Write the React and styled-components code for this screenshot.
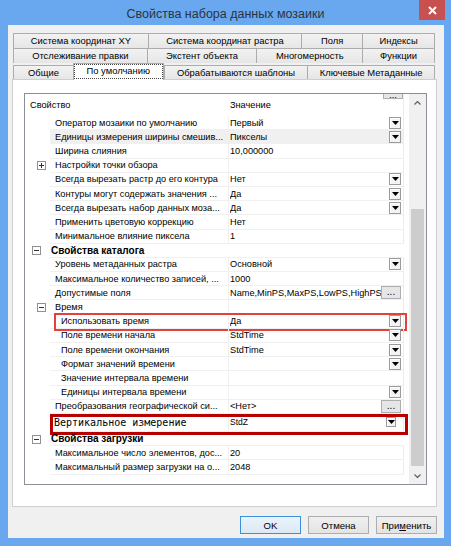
import styled, { createGlobalStyle } from 'styled-components'

const tabRows = [
    { height: 15, tabs: [
        { label: 'Система координат XY', width: 135 },
        { label: 'Система координат растра', width: 154 },
        { label: 'Поля', width: 61 },
        { label: 'Индексы', width: 73 },
    ] },
    { height: 15, tabs: [
        { label: 'Отслеживание правки', width: 134 },
        { label: 'Экстент объекта', width: 110 },
        { label: 'Многомерность', width: 106 },
        { label: 'Функции', width: 73 },
    ] },
    { height: 16, tabs: [
        { label: 'Общие', width: 60 },
        { label: 'По умолчанию', width: 91, active: true },
        { label: 'Обрабатываются шаблоны', width: 144 },
        { label: 'Ключевые Метаданные', width: 128 },
    ] },
];

const rows = [
    { name: 'Оператор мозаики по умолчанию', value: 'Первый', control: 'drop' },
    { name: 'Единицы измерения ширины смешив...', value: 'Пикселы', control: 'drop', selected: true },
    { name: 'Ширина слияния', value: '10,000000' },
    { type: 'group', name: 'Настройки точки обзора', sign: '+' },
    { name: 'Всегда вырезать растр до его контура', value: 'Нет', control: 'drop' },
    { name: 'Контуры могут содержать значения ...', value: 'Да', control: 'drop' },
    { name: 'Всегда вырезать набор данных моза...', value: 'Да', control: 'drop' },
    { name: 'Применить цветовую коррекцию', value: 'Нет' },
    { name: 'Минимальное влияние пиксела', value: '1' },
    { type: 'category', name: 'Свойства каталога' },
    { name: 'Уровень метаданных растра', value: 'Основной', control: 'drop' },
    { name: 'Максимальное количество записей, ...', value: '1000' },
    { name: 'Допустимые поля', value: 'Name,MinPS,MaxPS,LowPS,HighPS,Ta', control: 'more' },
    { type: 'group', name: 'Время', sign: '-' },
    { name: 'Использовать время', value: 'Да', control: 'drop', level: 1, mark: 'light' },
    { name: 'Поле времени начала', value: 'StdTime', control: 'drop', level: 1 },
    { name: 'Поле времени окончания', value: 'StdTime', control: 'drop', level: 1 },
    { name: 'Формат значений времени', value: '', control: 'drop', level: 1 },
    { name: 'Значение интервала времени', value: '', level: 1 },
    { name: 'Единицы интервала времени', value: '', control: 'drop', level: 1 },
    { name: 'Преобразования географической си...', value: '<Нет>', control: 'more' },
    { name: 'Вертикальное измерение', value: 'StdZ', control: 'drop', mark: 'strong' },
    { type: 'category', name: 'Свойства загрузки' },
    { name: 'Максимальное число элементов, дос...', value: '20' },
    { name: 'Максимальный размер загрузки на о...', value: '2048' },
];

function Expander({ sign, offset }) {
    return (
        <ExpanderBox $offset={offset}>
            <svg width="5" height="5" viewBox="0 0 5 5">
                <path d="M0 2.5h5" stroke="#333" strokeWidth="1" />
                {sign === '+' && <path d="M2.5 0v5" stroke="#333" strokeWidth="1" />}
            </svg>
        </ExpanderBox>
    );
}

function DropButton({ small }) {
    return (
        <DropBox $small={small}>
            <svg width="7" height="4" viewBox="0 0 7 4">
                <path d="M0 0h7L3.5 4z" fill="#000" />
            </svg>
        </DropBox>
    );
}

function PropertyRow({ row }) {
    const strong = row.mark === 'strong';

    if (row.type === 'category') {
        return (
            <Row>
                <Gutter><Expander sign="-" offset={7} /></Gutter>
                <CategoryName>{row.name}</CategoryName>
            </Row>
        );
    }

    return (
        <Row $tall={strong}>
            <Gutter>{row.type === 'group' && <Expander sign={row.sign} offset={12} />}</Gutter>
            <NameCell $level={row.level || 0} $selected={row.selected} $mono={strong}>
                {row.name}
            </NameCell>
            <ValueCell $selected={row.selected}>
                <ValueText $small={strong}>{row.value}</ValueText>
                {row.control === 'drop' && <DropButton small={strong} />}
                {row.control === 'more' && <MoreButton>...</MoreButton>}
            </ValueCell>
            {row.mark && <Mark $variant={row.mark} />}
        </Row>
    );
}

function App() {
    return (
        <>
            <GlobalStyle />
            <Window>
                <TitleBar>
                    <Title>Свойства набора данных мозаики</Title>
                    <CloseButton>
                        <svg width="9" height="9" viewBox="0 0 9 9">
                            <path d="M1 1l7 7M8 1l-7 7" stroke="#fff" strokeWidth="2" />
                        </svg>
                    </CloseButton>
                </TitleBar>

                <DialogBody>
                    <TabStrip>
                        {tabRows.map((tabRow, i) => (
                            <TabRow key={i} $h={tabRow.height}>
                                {tabRow.tabs.map((tab) => (
                                    <Tab key={tab.label} $w={tab.width} $active={tab.active} $lower={i === 2}>
                                        {tab.label}
                                    </Tab>
                                ))}
                            </TabRow>
                        ))}
                    </TabStrip>

                    <TabPanel>
                        <PropertyGrid>
                            <GridContent>
                                <GridHeader>
                                    <HeaderName>Свойство</HeaderName>
                                    <HeaderValue>Значение</HeaderValue>
                                    <HiddenButton>...</HiddenButton>
                                </GridHeader>
                                {rows.map((row) => (
                                    <PropertyRow key={row.name} row={row} />
                                ))}
                            </GridContent>
                            <ScrollBar>
                                <ScrollArrow>
                                    <svg width="7" height="4" viewBox="0 0 7 4">
                                        <path d="M0.5 3.5L3.5 0.5L6.5 3.5" stroke="#606060" strokeWidth="1.2" fill="none" />
                                    </svg>
                                </ScrollArrow>
                                <ScrollTrack>
                                    <ScrollThumb $top={98} $h={257} />
                                </ScrollTrack>
                                <ScrollArrow>
                                    <svg width="7" height="4" viewBox="0 0 7 4">
                                        <path d="M0.5 0.5L3.5 3.5L6.5 0.5" stroke="#606060" strokeWidth="1.2" fill="none" />
                                    </svg>
                                </ScrollArrow>
                            </ScrollBar>
                        </PropertyGrid>
                    </TabPanel>

                    <Footer>
                        <DialogButton $default>OK</DialogButton>
                        <DialogButton>Отмена</DialogButton>
                        <DialogButton>При<u>м</u>енить</DialogButton>
                    </Footer>
                </DialogBody>
            </Window>
        </>
    );
}

const GlobalStyle = createGlobalStyle`
    html, body {
        margin: 0;
        padding: 0;
        background: #69a8ef;
    }
    body {
        font-family: "Liberation Sans", Arial, sans-serif;
        font-size: 9.2px;
        color: #000;
    }
    * {
        box-sizing: border-box;
    }
`;

const Window = styled.div`
    width: 451px;
    height: 546px;
    background: #69a8ef;
    display: flex;
    flex-direction: column;
`;

const TitleBar = styled.div`
    height: 25px;
    flex: none;
    display: grid;
    grid-template-columns: 1fr auto 1fr;
    align-items: start;
`;

const Title = styled.div`
    grid-column: 2;
    font-size: 12.5px;
    line-height: 28px;
    color: #2b3340;
    white-space: nowrap;
`;

const CloseButton = styled.div`
    grid-column: 3;
    justify-self: end;
    width: 26px;
    height: 20px;
    margin-right: 6px;
    background: #c75050;
    display: flex;
    align-items: center;
    justify-content: center;
`;

const DialogBody = styled.div`
    flex: 1;
    margin: 0 7px 8px 8px;
    background: #f0f0f0;
    padding: 8px 7px 0 4px;
    display: flex;
    flex-direction: column;
`;

const TabStrip = styled.div`
    margin: 0 2px 0 1px;
    display: flex;
    flex-direction: column;
`;

const TabRow = styled.div`
    height: ${({ $h }) => $h}px;
    display: flex;
    align-items: flex-end;
`;

const Tab = styled.div`
    width: ${({ $w }) => $w}px;
    height: ${({ $active, $lower }) => ($active ? '17px' : $lower ? '14px' : '100%')};
    margin-bottom: ${({ $active }) => ($active ? '-1px' : '0')};
    position: relative;
    z-index: ${({ $active }) => ($active ? 1 : 0)};
    border: 1px solid #acacac;
    border-bottom: none;
    border-right-width: ${({ $active }) => ($active ? '1px' : '0')};
    background: ${({ $active }) => ($active ? '#fff' : 'linear-gradient(#f2f2f2, #e6e6e6)')};
    outline: ${({ $active }) => ($active ? '1px dotted #444' : 'none')};
    outline-offset: -2px;
    display: flex;
    align-items: ${({ $active }) => ($active ? 'flex-start' : 'center')};
    justify-content: center;
    padding-top: ${({ $active }) => ($active ? '1px' : '0')};
    font-size: 9.4px;
    line-height: 12px;
    color: #000;
    white-space: nowrap;

    &:last-child {
        border-right-width: 1px;
    }
`;

const TabPanel = styled.div`
    height: 428px;
    flex: none;
    background: #fff;
    border: 1px solid #cfcfcf;
    padding: 13px 9px 0 11px;
`;

const PropertyGrid = styled.div`
    height: 392px;
    border: 1px solid #8a8f98;
    display: flex;
    background: #fff;
`;

const GridContent = styled.div`
    flex: 1;
    padding-right: 5px;
    display: flex;
    flex-direction: column;
    overflow: hidden;
`;

const GridHeader = styled.div`
    height: 22px;
    flex: none;
    display: flex;
    align-items: center;
    position: relative;
`;

const HeaderName = styled.div`
    width: 203px;
    padding-left: 5px;
`;

const HeaderValue = styled.div`
    flex: 1;
    height: 100%;
    display: flex;
    align-items: center;
    padding-left: 2px;
    border-right: 1px solid #e4ecf4;
`;

const HiddenButton = styled.div`
    position: absolute;
    top: 0;
    right: 1px;
    width: 20px;
    height: 5px;
    border: 1px solid #adadad;
    border-top: none;
    background: #e6e6e6;
    font-size: 9px;
    line-height: 2px;
    text-align: center;
    overflow: hidden;
`;

const Row = styled.div`
    height: ${({ $tall }) => ($tall ? '18px' : '14.2px')};
    flex: none;
    display: flex;
    position: relative;
`;

const Gutter = styled.div`
    width: 25px;
    flex: none;
    display: flex;
    align-items: center;
`;

const ExpanderBox = styled.div`
    width: 9px;
    height: 9px;
    margin-left: ${({ $offset }) => $offset}px;
    border: 1px solid #919191;
    background: #fff;
    display: flex;
    align-items: center;
    justify-content: center;
`;

const NameCell = styled.div`
    width: 178px;
    flex: none;
    display: flex;
    align-items: center;
    padding-left: ${({ $level, $mono }) => ($mono ? 4 : 5 + $level * 6)}px;
    border-bottom: 1px solid #f0f0f0;
    background: ${({ $selected }) => ($selected ? '#f0f0f0' : 'transparent')};
    font-family: ${({ $mono }) => ($mono ? '"DejaVu Sans Mono", monospace' : 'inherit')};
    font-size: ${({ $mono }) => ($mono ? '10px' : '9.2px')};
    white-space: nowrap;
    overflow: hidden;
`;

const CategoryName = styled.div`
    flex: 1;
    display: flex;
    align-items: center;
    padding-left: 1px;
    border-bottom: 1px solid #f0f0f0;
    font-size: 10px;
    font-weight: bold;
    white-space: nowrap;
`;

const ValueCell = styled.div`
    flex: 1;
    min-width: 0;
    display: flex;
    align-items: center;
    padding: 0 2px 0 1px;
    border-left: 1px solid #f0f0f0;
    border-right: 1px solid #ececec;
    border-bottom: 1px solid #f0f0f0;
    background: ${({ $selected }) => ($selected ? '#f0f0f0' : 'transparent')};
`;

const ValueText = styled.div`
    flex: 1;
    min-width: 0;
    overflow: hidden;
    white-space: nowrap;
    font-size: ${({ $small }) => ($small ? '8.5px' : '9.2px')};
`;

const DropBox = styled.div`
    width: ${({ $small }) => ($small ? '10px' : '12px')};
    height: ${({ $small }) => ($small ? '10px' : '12px')};
    margin-right: ${({ $small }) => ($small ? '5px' : '0')};
    flex: none;
    border: 1px solid #9a9a9a;
    background: #f3f3f3;
    box-shadow: inset 1px 1px 0 #fff;
    display: flex;
    align-items: center;
    justify-content: center;
`;

const MoreButton = styled.div`
    width: 20px;
    height: 13px;
    flex: none;
    border: 1px solid #adadad;
    background: #e6e6e6;
    font-size: 10px;
    line-height: 9px;
    text-align: center;
`;

const Mark = styled.div`
    position: absolute;
    pointer-events: none;
    top: ${({ $variant }) => ($variant === 'strong' ? '0' : '-2px')};
    bottom: ${({ $variant }) => ($variant === 'strong' ? '-3px' : '-2px')};
    left: ${({ $variant }) => ($variant === 'strong' ? '25px' : '29px')};
    right: ${({ $variant }) => ($variant === 'strong' ? '-4px' : '-3px')};
    border: ${({ $variant }) => ($variant === 'strong' ? '3px solid #b80000' : '2px solid #e5403c')};
`;

const ScrollBar = styled.div`
    width: 17px;
    flex: none;
    background: #f0f0f0;
    display: flex;
    flex-direction: column;
`;

const ScrollArrow = styled.div`
    height: 17px;
    flex: none;
    display: flex;
    align-items: center;
    justify-content: center;
`;

const ScrollTrack = styled.div`
    flex: 1;
    display: flex;
    flex-direction: column;
    align-items: center;
`;

const ScrollThumb = styled.div`
    width: 13px;
    height: ${({ $h }) => $h}px;
    margin-top: ${({ $top }) => $top}px;
    background: #cdcdcd;
`;

const Footer = styled.div`
    display: flex;
    justify-content: flex-end;
    gap: 7px;
    margin-top: 9px;
`;

const DialogButton = styled.div`
    width: 61px;
    height: 18px;
    border: 1px solid ${({ $default }) => ($default ? '#3c8fdd' : '#adadad')};
    background: ${({ $default }) => ($default ? 'linear-gradient(#eaf3fb, #dbe9f6)' : 'linear-gradient(#f0f0f0, #e3e3e3)')};
    display: flex;
    align-items: center;
    justify-content: center;
    font-size: 9.6px;
    color: #000;

    u {
        text-decoration: underline;
    }
`;

export default App
